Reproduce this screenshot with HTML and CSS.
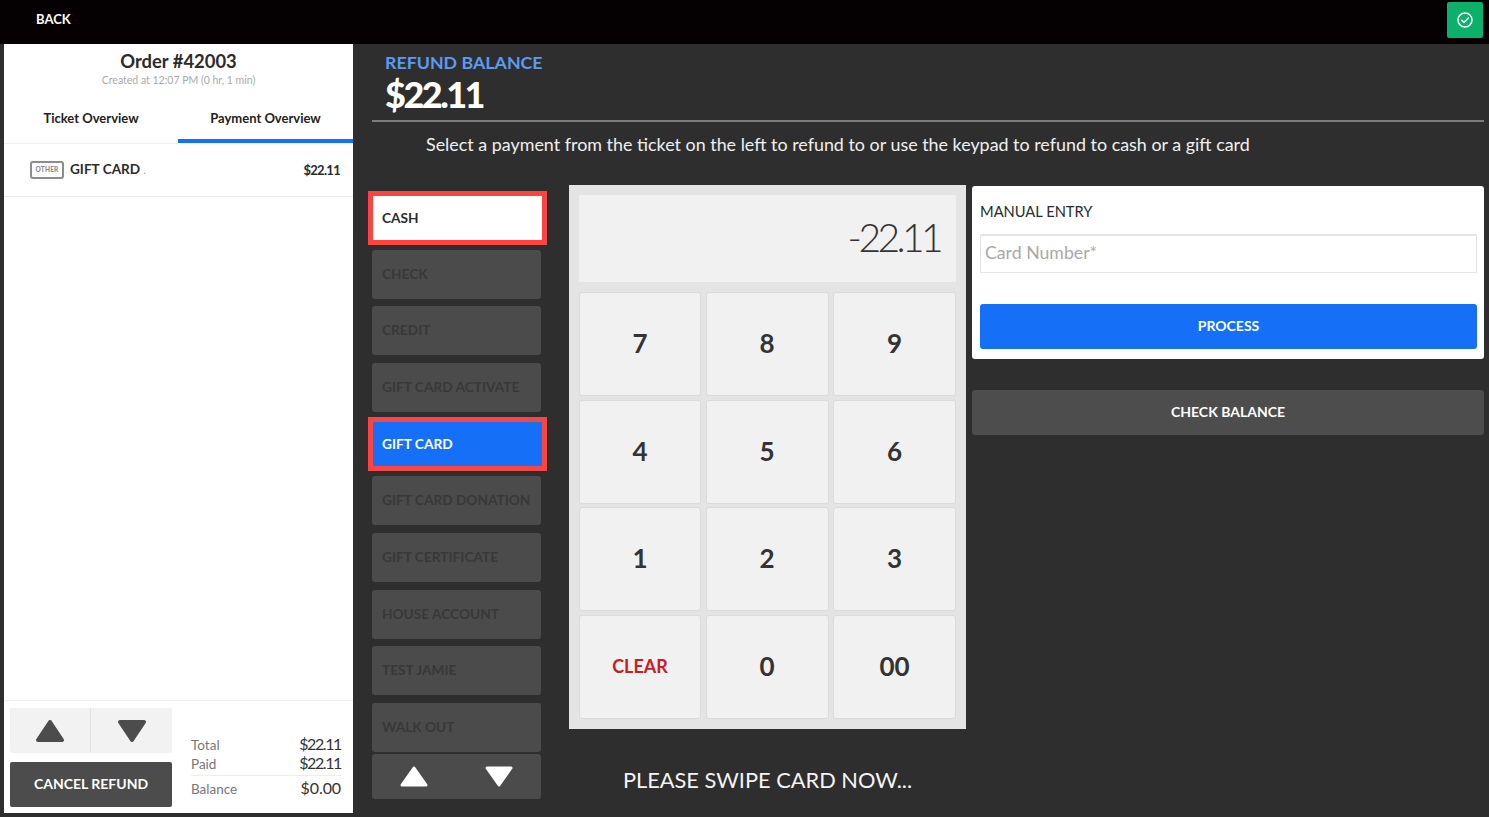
FILE: index.html
```html
<!DOCTYPE html>
<html lang="en">
<head>
  <meta charset="UTF-8" />
  <title>Refund</title>
  <link rel="stylesheet" href="styles.css">
</head>
<body>
  <!-- Top bar -->
  <header class="topbar">
    <span class="back">BACK</span>
    <span class="done">
      <svg width="18" height="18" viewBox="0 0 18 18" fill="none" stroke="#fff" stroke-width="1.5" stroke-linecap="round" stroke-linejoin="round">
        <circle cx="9" cy="9" r="7"/>
        <path d="M5.8 9.3l2.3 2.2 4.2-4.6"/>
      </svg>
    </span>
  </header>

  <div class="page">
    <!-- Ticket panel -->
    <aside class="ticket">
      <div class="ticket-head">
        <h1>Order #42003</h1>
        <p>Created at 12:07 PM (0 hr, 1 min)</p>
      </div>
      <div class="tabs">
        <div class="tab">Ticket Overview</div>
        <div class="tab active">Payment Overview</div>
      </div>
      <div class="pay-row">
        <span class="other">OTHER</span>
        <span class="pay-name">GIFT CARD <i>.</i></span>
        <span class="pay-amount">$22.11</span>
      </div>
      <div class="ticket-foot">
        <div class="foot-left">
          <div class="pager">
            <div class="pager-cell">
              <svg width="30" height="24" viewBox="0 0 30 24"><path d="M15 3L27 21H3z" fill="#4c4c4c" stroke="#4c4c4c" stroke-width="4" stroke-linejoin="round"/></svg>
            </div>
            <div class="pager-cell">
              <svg width="30" height="24" viewBox="0 0 30 24"><path d="M15 21L27 3H3z" fill="#4c4c4c" stroke="#4c4c4c" stroke-width="4" stroke-linejoin="round"/></svg>
            </div>
          </div>
          <div class="cancel">CANCEL REFUND</div>
        </div>
        <div class="totals">
          <div class="total-row"><span>Total</span><b>$22.11</b></div>
          <div class="total-row ruled"><span>Paid</span><b>$22.11</b></div>
          <div class="total-row balance"><span>Balance</span><b>$0.00</b></div>
        </div>
      </div>
    </aside>

    <!-- Refund area -->
    <main class="refund">
      <div class="refund-head">
        <div class="refund-label">REFUND BALANCE</div>
        <div class="refund-value">$22.11</div>
      </div>
      <p class="hint">Select a payment from the ticket on the left to refund to or use the keypad to refund to cash or a gift card</p>

      <div class="columns">
        <div class="methods">
          <div class="method picked">CASH</div>
          <div class="method">CHECK</div>
          <div class="method">CREDIT</div>
          <div class="method">GIFT CARD ACTIVATE</div>
          <div class="method picked blue">GIFT CARD</div>
          <div class="method">GIFT CARD DONATION</div>
          <div class="method">GIFT CERTIFICATE</div>
          <div class="method">HOUSE ACCOUNT</div>
          <div class="method">TEST JAMIE</div>
          <div class="method">WALK OUT</div>
          <div class="method-pager">
            <svg width="30" height="24" viewBox="0 0 30 24"><path d="M15 4L27 21H3z" fill="#fff" stroke="#fff" stroke-width="3" stroke-linejoin="round"/></svg>
            <svg width="30" height="24" viewBox="0 0 30 24"><path d="M15 21L27 4H3z" fill="#fff" stroke="#fff" stroke-width="3" stroke-linejoin="round"/></svg>
          </div>
        </div>

        <div class="keypad-col">
          <div class="keypad">
            <div class="display">-22.11</div>
            <div class="keys">
              <div class="key">7</div>
              <div class="key">8</div>
              <div class="key">9</div>
              <div class="key">4</div>
              <div class="key">5</div>
              <div class="key">6</div>
              <div class="key">1</div>
              <div class="key">2</div>
              <div class="key">3</div>
              <div class="key clear">CLEAR</div>
              <div class="key">0</div>
              <div class="key">00</div>
            </div>
          </div>
          <div class="swipe">PLEASE SWIPE CARD NOW...</div>
        </div>

        <div class="entry-col">
          <div class="entry">
            <div class="entry-title">MANUAL ENTRY</div>
            <div class="card-input">Card Number*</div>
            <div class="process">PROCESS</div>
          </div>
          <div class="check-balance">CHECK BALANCE</div>
        </div>
      </div>
    </main>
  </div>
</body>
</html>
```

FILE: styles.css
```css
html, body {
  margin: 0;
  padding: 0;
  height: 817px;
  overflow: hidden;
  font-family: 'Lato', 'Liberation Sans', sans-serif;
  background: #2e2e2e;
  color: #2b2b2b;
}

.topbar {
  height: 44px;
  background: #050103;
  display: flex;
  align-items: center;
  justify-content: space-between;
  padding: 0 6px 6px 36px;
  box-sizing: border-box;
  color: #fff;
}

.back {
  font-size: 13px;
  font-weight: 700;
}

.done {
  width: 36px;
  height: 36px;
  margin-top: 2px;
  background: #0bb06a;
  border-radius: 2px;
  display: flex;
  align-items: center;
  justify-content: center;
}

.page {
  display: flex;
  height: 773px;
}

/* Ticket panel */
.ticket {
  width: 349px;
  height: 769px;
  margin-left: 4px;
  background: #fff;
  display: flex;
  flex-direction: column;
}

.ticket-head {
  text-align: center;
  padding-top: 7px;
  height: 52px;
}

.ticket-head h1 {
  margin: 0;
  font-size: 18.4px;
  line-height: 21px;
  font-weight: 700;
}

.ticket-head p {
  margin: 1px 0 0;
  font-size: 10.5px;
  line-height: 14px;
  color: #a9a9a9;
}

.tabs {
  display: flex;
  height: 40px;
  border-bottom: 1px solid #f0f0f0;
}

.tab {
  width: 174px;
  text-align: center;
  font-size: 13px;
  font-weight: 700;
  line-height: 22px;
  padding-top: 4px;
  color: #222;
}

.tab.active {
  width: 175px;
  height: 32px;
  border-bottom: 4px solid #1570f7;
}

.pay-row {
  display: flex;
  align-items: center;
  height: 52px;
  padding: 0 13px 0 26px;
  border-bottom: 1px solid #e9e9e9;
}

.other {
  width: 30px;
  height: 14px;
  border: 2px solid #8c8c8c;
  border-radius: 3px;
  font-size: 6.5px;
  font-weight: 900;
  letter-spacing: 0.2px;
  line-height: 14px;
  text-align: center;
  color: #8c8c8c;
  margin-right: 6px;
}

.pay-name {
  font-size: 13.6px;
  font-weight: 700;
  line-height: 16px;
  flex: 1;
}

.pay-name i {
  font-style: normal;
  font-size: 9px;
  color: #999;
}

.pay-amount {
  font-size: 13px;
  font-weight: 700;
  line-height: 16px;
  letter-spacing: -0.7px;
}

.ticket-foot {
  margin-top: auto;
  height: 113px;
  border-top: 1px solid #efefef;
  display: flex;
  padding: 7px 12px 0 6px;
  box-sizing: border-box;
}

.foot-left {
  width: 162px;
}

.pager {
  display: flex;
  height: 45px;
  background: #f2f2f2;
  border-radius: 2px;
}

.pager-cell {
  flex: 1;
  display: flex;
  align-items: center;
  justify-content: center;
}

.pager-cell + .pager-cell {
  flex: 0 0 81px;
  border-left: 1px solid #e2e2e2;
}

.cancel {
  height: 45px;
  margin-top: 9px;
  background: #4c4c4c;
  color: #fff;
  border-radius: 2px;
  font-size: 14px;
  font-weight: 700;
  line-height: 44px;
  text-align: center;
}

.totals {
  flex: 1;
  margin-left: 19px;
  padding-top: 28px;
}

.total-row {
  display: flex;
  justify-content: space-between;
  align-items: baseline;
  font-size: 13.5px;
  line-height: 19px;
  color: #777;
}

.total-row b {
  font-size: 16px;
  line-height: 1;
  font-weight: 400;
  letter-spacing: -1.4px;
  color: #333;
}

.total-row.ruled {
  border-bottom: 1px solid #ededed;
  padding-bottom: 1px;
}

.total-row.balance {
  line-height: 27px;
}

.total-row.balance b {
  letter-spacing: -0.1px;
}

/* Refund area */
.refund {
  flex: 1;
  display: flex;
  flex-direction: column;
  color: #fff;
}

.refund-head {
  margin-left: 19px;
  margin-right: 5px;
  padding: 7px 0 0 13px;
  height: 69px;
  border-bottom: 2px solid #7c7c7c;
}

.refund-label {
  font-size: 17.8px;
  font-weight: 700;
  line-height: 22px;
  color: #5b9bf2;
}

.refund-value {
  font-size: 36px;
  font-weight: 900;
  letter-spacing: -2.5px;
  line-height: 42px;
}

.hint {
  margin: 10px 0 0 73px;
  font-size: 17.9px;
  line-height: 24px;
  color: #f0f0f0;
}

.columns {
  display: flex;
  margin-top: 29px;
  margin-left: 19px;
}

/* Payment methods */
.methods {
  width: 169px;
  padding-top: 8px;
  display: flex;
  flex-direction: column;
  gap: 7.67px;
}

.method {
  height: 49px;
  box-sizing: border-box;
  background: #4b4b4b;
  border-radius: 3px;
  padding-left: 10px;
  font-size: 13.7px;
  font-weight: 700;
  line-height: 47px;
  color: #383838;
}

.method.picked {
  height: 54px;
  width: 179px;
  margin: -2.5px 0 -2.5px -4px;
  border: 5px solid #fb4444;
  border-radius: 0;
  background: #fff;
  padding-left: 9px;
  line-height: 43px;
  color: #2b2b2b;
}

.method.picked.blue {
  background: #1570f7;
  color: #fff;
}

.method-pager {
  height: 45px;
  margin-top: -5.67px;
  background: #4b4b4b;
  border-radius: 3px;
  display: flex;
  justify-content: space-around;
  align-items: center;
}

/* Keypad */
.keypad-col {
  width: 397px;
  margin-left: 28px;
}

.keypad {
  height: 544px;
  box-sizing: border-box;
  background: #e4e4e4;
  padding: 10px;
}

.display {
  height: 87px;
  background: #f1f1f1;
  color: #333;
  font-size: 39px;
  font-weight: 300;
  letter-spacing: -3.6px;
  line-height: 84px;
  text-align: right;
  padding-right: 16px;
}

.keys {
  display: grid;
  grid-template-columns: 122px 123px 123px;
  grid-template-rows: 104px 104px 104px 104px;
  column-gap: 4.5px;
  row-gap: 3.67px;
  margin-top: 10px;
}

.key {
  background: #f1f1f1;
  border: 1px solid #dadada;
  border-radius: 3px;
  box-sizing: border-box;
  display: flex;
  align-items: center;
  justify-content: center;
  padding-bottom: 2px;
  font-size: 26px;
  font-weight: 700;
  color: #333;
}

.key.clear {
  font-size: 18px;
  color: #c6201f;
}

.swipe {
  margin-top: 38px;
  text-align: center;
  font-size: 21.8px;
  line-height: 26px;
  color: #f4f4f4;
}

/* Manual entry */
.entry-col {
  width: 512px;
  margin-left: 6px;
}

.entry {
  height: 173px;
  background: #fff;
  border-radius: 3px;
  margin-top: 1px;
  padding: 15px 7px 0 8px;
  box-sizing: border-box;
  color: #2b2b2b;
}

.entry-title {
  font-size: 14.7px;
  line-height: 20px;
}

.card-input {
  height: 39px;
  margin-top: 13px;
  box-sizing: border-box;
  border: 1px solid #e4e4e4;
  border-top-width: 2px;
  padding-left: 4px;
  font-size: 17.7px;
  line-height: 34px;
  color: #a9a9a9;
}

.process {
  height: 45px;
  margin-top: 31px;
  background: #1570f7;
  border-radius: 3px;
  color: #fff;
  font-size: 14px;
  font-weight: 700;
  line-height: 44px;
  text-align: center;
}

.check-balance {
  height: 45px;
  margin-top: 31px;
  background: #4d4d4d;
  border-radius: 3px;
  color: #fff;
  font-size: 14px;
  font-weight: 700;
  line-height: 43px;
  text-align: center;
}
```
